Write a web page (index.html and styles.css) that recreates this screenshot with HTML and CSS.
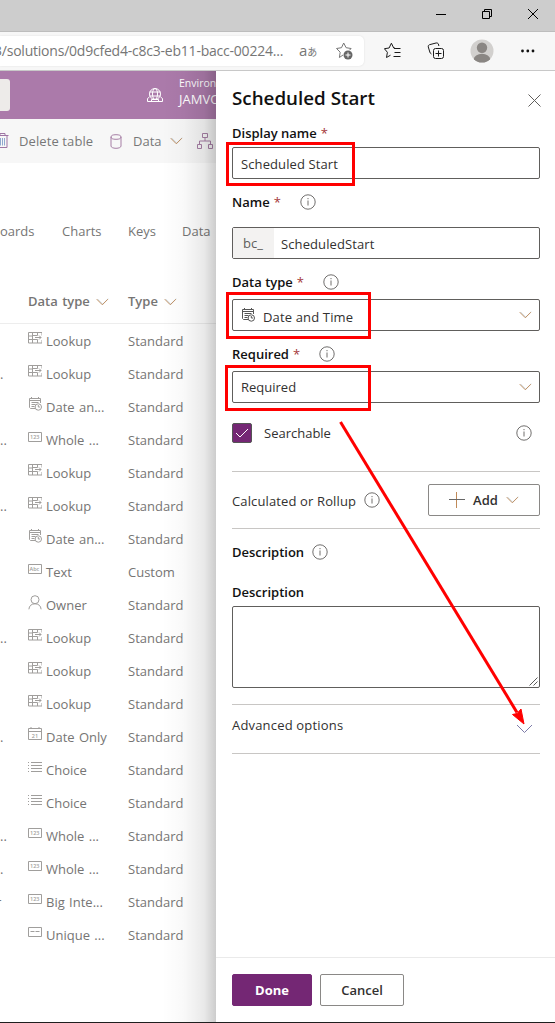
FILE: index.html
```html
<!DOCTYPE html>
<html lang="en">
<head>
<meta charset="utf-8">
<title>Scheduled Start</title>
<link rel="stylesheet" href="styles.css">
</head>
<body>
<svg class="defs" width="0" height="0">
  <symbol id="lookup" viewBox="0 0 14 12"><path d="M14 3.500v-3h-13.500v10.500h13.500v-3M.5 4h4M.5 7.500h4M4.500 .5v10.500M9.500 .5v3h-5M4.500 7.500h5v3.500M7 5.500h6M11 3.500l2 2l-2 2"/></symbol>
  <symbol id="datetime" viewBox="0 0 14 14"><path d="M7 11.500h-4.500l-1-1v-9h11v4.500M1.500 3.500h11M3.500 0v2M10.500 0v2M3.500 5.500h7M3.500 7.500h4M3.500 9.500h3"/><circle cx="10.300" cy="10" r="3.200"/><path d="M10.300 8v2h1.700"/></symbol>
  <symbol id="dateonly" viewBox="0 0 14 14"><path d="M.5 1.500h13v11h-13zM.5 4.500h13M3 0v2M11 0v2"/></symbol>
  <symbol id="frame" viewBox="0 0 14 11"><path d="M.5 .5h13v9h-13z"/></symbol>
  <symbol id="unique" viewBox="0 0 14 11"><path d="M.5 .5h13v9h-13zM2.500 4.500h4M7.500 4.500h4"/></symbol>
  <symbol id="choice" viewBox="0 0 14 11"><path d="M3 .5h11M3 3.500h11M3 6.500h11M3 9.500h11M0 .5h1M0 3.500h1M0 6.500h1M0 9.500h1"/></symbol>
  <symbol id="owner" viewBox="0 0 14 15"><circle cx="7" cy="4.700" r="4"/><path d="M.9 14.300c.2-3.500 2.600-5.500 6.100-5.500s5.900 2 6.100 5.500"/></symbol>
  <symbol id="chevron" viewBox="0 0 14 8"><path class="c2" d="M1.600 .8l5.600 5.600l6-6"/><path class="c1" d="M.8 1l6 6l6-6"/></symbol>
  <symbol id="info" viewBox="0 0 16 16"><circle cx="8" cy="8" r="7.200"/><path d="M8 6.500v5M8 4v1.200"/></symbol>
</svg>
<div class="window">
  <div class="titlebar">
    <svg width="13" height="12"><path d="M2 6.500h10"/></svg>
    <svg width="12" height="12"><path d="M1.500 3.500h7v7h-7zM3.500 3.500v-2h7v7h-2"/></svg>
    <svg width="12" height="12"><path d="M1 1l10 10M11 1l-10 10"/></svg>
  </div>
  <div class="toolbar">
    <div class="address">
      <span class="url">3/solutions/0d9cfed4-c8c3-eb11-bacc-00224...</span>
      <span class="translate">a<small>あ</small></span>
      <svg class="fav" width="18" height="18"><path d="M8 13l-3.600 2.500l.8-5.300l-3.700-3.700l5-.8l2.200-4.700l2.400 4.700l5 .8l-1.500 1.600"/><circle cx="13" cy="13" r="4.500" class="solid"/><path class="plus" d="M10.500 13h5M13 10.500v5"/></svg>
    </div>
    <div class="tools">
      <svg width="18" height="18"><path d="M6.500 13.200l-4 2.300l.9-5.200l-3-3.600l4.700-.7l2.300-4.800l2.300 4.800h1.300M10 6.500h6.500M10.500 10.500h6M9.500 14.500h7"/></svg>
      <svg width="18" height="18"><rect x="6.500" y="6.500" width="10" height="10" rx="2"/><path d="M8.500 11.500h6M11.500 8.500v6M4.500 12c-1-.5-1.500-1-1.700-2l-1.500-5c-.3-1.200.3-2 1.200-2.300l6.500-1.700c1.200-.2 2 .2 2.400 1l.5 2"/></svg>
      <svg class="avatar" width="24" height="24"><defs><clipPath id="disc"><circle cx="12" cy="12" r="11.500"/></clipPath></defs><circle cx="12" cy="12" r="11.500" fill="#d2d0ce"/><g clip-path="url(#disc)" fill="#8a8683"><circle cx="12" cy="8.700" r="5.200"/><ellipse cx="12" cy="20.300" rx="8.200" ry="5.500"/></g></svg>
      <svg class="more" width="16" height="6"><circle cx="2.500" cy="3" r="1.400"/><circle cx="7.800" cy="3" r="1.400"/><circle cx="13" cy="3" r="1.400"/></svg>
    </div>
  </div>
  <div class="app">
    <main class="page">
      <header class="brandbar">
        <div class="search"></div>
        <svg class="globe" width="18" height="17"><circle cx="9" cy="7" r="5.500"/><ellipse cx="9" cy="7" rx="2.500" ry="5.500"/><path d="M3.500 5h11M3.500 9h11M3.500 10l-2 1.500v3h15v-3l-2-1.500M5.500 14.500v-2h7v2"/></svg>
        <div class="env"><span>Environment</span><strong>JAMVO</strong></div>
      </header>
      <nav class="commands">
        <svg class="trash" width="13" height="16"><path d="M0 2.500h12.500M4 2.500v-2h5v2M2 2.500v12h9v-12"/><path class="slats" d="M4.500 5v7.500M6.500 5v7.500M8.500 5v7.500"/></svg>
        <span class="delete">Delete table</span>
        <svg class="cyl" width="12" height="15"><ellipse cx="6" cy="3" rx="5" ry="2.300"/><path d="M1 3v9c0 1.300 2 2.300 5 2.300s5-1 5-2.300v-9"/></svg>
        <span class="data">Data</span>
        <svg class="chev" width="13" height="8"><use href="#chevron"/></svg>
        <svg class="tree" width="16" height="16"><path d="M5.500 .5h5v4h-5zM.5 11.500h4v4h-4zM11.500 11.500h4v4h-4zM8 4.500v3.500M2.500 11.500v-3.500h11v3.500"/></svg>
      </nav>
      <div class="tabs"><span>oards</span><span>Charts</span><span>Keys</span><span>Data</span></div>
      <div class="row head"><i></i><span>Data type <svg class="chev" width="13" height="8"><use href="#chevron"/></svg></span><span>Type <svg class="chev" width="13" height="8"><use href="#chevron"/></svg></span></div>
      <div class="row"><i></i><span><svg class="ico"><use href="#lookup"/></svg>Lookup</span><span>Standard</span></div>
      <div class="row"><i>.</i><span><svg class="ico"><use href="#lookup"/></svg>Lookup</span><span>Standard</span></div>
      <div class="row"><i></i><span><svg class="ico tall"><use href="#datetime"/></svg>Date an...</span><span>Standard</span></div>
      <div class="row"><i>..</i><span><svg class="ico low"><use href="#frame"/><text x="2" y="7">123</text></svg>Whole ...</span><span>Standard</span></div>
      <div class="row"><i></i><span><svg class="ico"><use href="#lookup"/></svg>Lookup</span><span>Standard</span></div>
      <div class="row"><i>..</i><span><svg class="ico"><use href="#lookup"/></svg>Lookup</span><span>Standard</span></div>
      <div class="row"><i></i><span><svg class="ico tall"><use href="#datetime"/></svg>Date an...</span><span>Standard</span></div>
      <div class="row"><i></i><span><svg class="ico low"><use href="#frame"/><text x="1.500" y="7">Abc</text></svg>Text</span><span>Custom</span></div>
      <div class="row"><i></i><span><svg class="ico owner"><use href="#owner"/></svg>Owner</span><span>Standard</span></div>
      <div class="row"><i>..</i><span><svg class="ico"><use href="#lookup"/></svg>Lookup</span><span>Standard</span></div>
      <div class="row"><i></i><span><svg class="ico"><use href="#lookup"/></svg>Lookup</span><span>Standard</span></div>
      <div class="row"><i></i><span><svg class="ico"><use href="#lookup"/></svg>Lookup</span><span>Standard</span></div>
      <div class="row"><i>.</i><span><svg class="ico tall"><use href="#dateonly"/><text x="3.800" y="10.800">21</text></svg>Date Only</span><span>Standard</span></div>
      <div class="row"><i></i><span><svg class="ico low"><use href="#choice"/></svg>Choice</span><span>Standard</span></div>
      <div class="row"><i></i><span><svg class="ico low"><use href="#choice"/></svg>Choice</span><span>Standard</span></div>
      <div class="row"><i>..</i><span><svg class="ico low"><use href="#frame"/><text x="2" y="7">123</text></svg>Whole ...</span><span>Standard</span></div>
      <div class="row"><i>.</i><span><svg class="ico low"><use href="#frame"/><text x="2" y="7">123</text></svg>Whole ...</span><span>Standard</span></div>
      <div class="row"><i class="clip">r</i><span><svg class="ico low"><use href="#frame"/><text x="2" y="7">123</text></svg>Big Inte...</span><span>Standard</span></div>
      <div class="row"><i></i><span><svg class="ico low"><use href="#unique"/></svg>Unique ...</span><span>Standard</span></div>
    </main>
    <aside class="panel">
      <div class="body">
        <div class="title"><h1>Scheduled Start</h1><svg class="close" width="13" height="13"><path d="M.5 .5l12 12M12.500 .5l-12 12"/></svg></div>
        <label class="lab first">Display name <b>*</b></label>
        <div class="field"><span class="low">Scheduled Start</span></div>
        <label class="lab name">Name <b>*</b><svg class="info"><use href="#info"/></svg></label>
        <div class="field prefixed"><span class="prefix">bc_</span><span class="low">ScheduledStart</span></div>
        <label class="lab type">Data type <b>*</b><svg class="info"><use href="#info"/></svg></label>
        <div class="field select"><svg class="dt" width="14" height="14"><use href="#datetime"/></svg><span class="dtv">Date and Time</span><svg class="chev" width="13" height="8"><use href="#chevron"/></svg></div>
        <label class="lab req">Required <b>*</b><svg class="info"><use href="#info"/></svg></label>
        <div class="field select"><span>Required</span><svg class="chev" width="13" height="8"><use href="#chevron"/></svg></div>
        <div class="check"><span class="box"><svg width="14" height="10"><path d="M1 5l4 4l8-8"/></svg></span><span class="slabel">Searchable</span><svg class="info"><use href="#info"/></svg></div>
        <div class="calc"><span>Calculated or Rollup</span><svg class="info"><use href="#info"/></svg><button class="btn add"><svg class="plusico" width="16" height="16"><path class="c1" d="M7.500 0v16"/><path d="M0 7.500h16"/></svg><span>Add</span><svg class="chev" width="13" height="8"><use href="#chevron"/></svg></button></div>
        <div class="lab desc">Description<svg class="info"><use href="#info"/></svg></div>
        <label class="lab desc2">Description</label>
        <div class="area"><svg width="9" height="9"><path d="M.5 8.500l8-8M4.500 8.500l4-4"/></svg></div>
        <div class="advanced"><span>Advanced options</span><svg class="big" width="17" height="10"><path d="M1 1l7.500 7.500l7.500-7.500"/></svg></div>
      </div>
      <footer><button class="btn done">Done</button><button class="btn cancel">Cancel</button></footer>
    </aside>
  </div>
  <svg class="marks" width="555" height="1023"><rect x="227.500" y="143.500" width="126" height="41"/><rect x="227.500" y="293.500" width="142" height="44"/><rect x="226.500" y="366.500" width="143" height="43"/><path d="M340.500 422L517 712.500"/><path class="tip" d="M524 724L512.500 714.500L517 713.500L521 709z"/></svg>
</div>
</body>
</html>
```
FILE: styles.css
```css
* { box-sizing: border-box; }
body { margin: 0; font: 13px/20px "Open Sans", "Noto Sans", sans-serif; color: #323130; background: #fff; }
svg { fill: none; stroke: currentColor; flex: none; display: block; }
svg text { stroke: none; fill: currentColor; font: 600 5.5px "Open Sans", sans-serif; }
.defs { position: absolute; }
.window { position: relative; width: 555px; height: 1023px; overflow: hidden; display: flex; flex-direction: column; border-bottom: 1px solid #1f1f1f; }
.titlebar { height: 32px; background: #cdcdcd; border-bottom: 1px solid #bdbdbd; display: flex; justify-content: flex-end; gap: 34px; padding: 8px 16px 0 0; color: #000; }
.toolbar { height: 39px; background: #f7f7f7; border-bottom: 1px solid #c8c8c8; display: flex; }
.address { width: 364px; height: 30px; margin-top: 4px; background: #fff; border-radius: 0 5px 5px 0; box-shadow: 0 0 2px #ddd; display: flex; align-items: center; color: #767676; overflow: hidden; }
.url { font-size: 14px; width: 299px; margin-left: -6px; white-space: nowrap; letter-spacing: -.22px; }
.translate { width: 36px; font-size: 15px; margin-left: 6px; margin-top: -3px; white-space: nowrap; }
.translate small { font: 10px "Noto Sans CJK JP", sans-serif; }
.fav .solid { fill: #666; stroke: none; }
.fav .plus { stroke: #fff; }
.tools { flex: 1; display: flex; align-items: center; padding-left: 20px; color: #1b1b1b; }
.tools svg { margin-right: 25px; }
.tools .avatar { stroke: none; margin-right: 26px; }
.tools .more { fill: #111; stroke: none; margin: 0; }
.app { flex: 1; display: flex; min-height: 0; }
.page { width: 216px; position: relative; overflow: hidden; color: #767574; white-space: nowrap; }
.page::after { content: ""; position: absolute; inset: 0 0 0 auto; width: 54px; background: linear-gradient(90deg, transparent, rgba(0,0,0,.025) 40%, rgba(0,0,0,.085) 78%, rgba(0,0,0,.2)); }
.brandbar { height: 48px; background: #ab7aaa; color: #fff; display: flex; }
.search { flex: none; width: 10px; height: 32px; margin-top: 8px; background: #edebe9; border-radius: 0 3px 3px 0; }
.globe { margin: 16px 0 0 136px; }
.env { margin: 5px 0 0 15px; display: flex; flex-direction: column; font-size: 10.5px; line-height: 15px; }
.env strong { font-size: 13px; line-height: 17px; font-weight: 500; }
.commands { height: 44px; background: #f7f7f7; display: flex; align-items: center; color: #777; }
.trash { margin-left: -4px; color: #9e75a4; }
.trash .slats { stroke: #8fa9cf; }
.delete { width: 75px; margin-left: 10px; letter-spacing: .1px; }
.cyl { margin-left: 16px; color: #a67fa5; }
.data { width: 29px; margin: 0 8px 0 11px; }
.tree { margin-left: 14px; color: #a67fa5; }
.tabs { height: 136px; padding-top: 58px; display: flex; }
.tabs span { flex: none; width: 66px; }
.tabs span:first-child { width: 62px; }
.tabs span:nth-child(3) { width: 54px; }
.row { height: 33px; display: grid; grid-template-columns: 28px 100px 1fr; padding-top: 6px; line-height: 23px; align-items: start; }
.row span { display: flex; height: 23px; align-items: center; word-spacing: 1px; }
.row i { font-style: normal; width: 5px; }
.row .clip { margin-left: -4px; }
.head { height: 45px; margin-top: -20px; padding-top: 11px; border-bottom: 1px solid #ededed; font-weight: 600; }
.head .chev { margin-left: 6px; }
.c1 { stroke: #c08a58; }
.c2 { stroke: #8db0c8; stroke-width: .6; }
.ico { align-self: flex-start; width: 14px; height: 12px; margin: 2px 4px 0 0; color: #a09e9c; }
.ico.low { height: 11px; margin-top: 3px; }
.ico.tall { height: 14px; margin-top: 1px; }
.ico.owner { height: 15px; margin-top: 1px; }
.panel { width: 339px; background: #fff; display: flex; flex-direction: column; color: #323130; }
.body { flex: 1; padding: 0 15px 0 16px; }
.title { height: 50px; padding-top: 4px; display: flex; justify-content: space-between; align-items: center; color: #111; }
h1 { margin: 0; font-size: 18.800px; font-weight: 600; line-height: 24px; }
.close { margin-top: 4px; margin-right: -1px; color: #605e5c; }
.lab { display: flex; align-items: center; font-weight: 600; color: #111; height: 24px; }
.lab b { color: #a4373a; font-weight: 400; margin-left: 4px; }
.first { height: 26px; padding-bottom: 2px; }
.name { height: 48px; padding-bottom: 2px; }
.type { height: 40px; padding-top: 6px; }
.req { height: 40px; padding-top: 6px; }
.info { width: 16px; height: 16px; color: #605e5c; stroke-width: .9; }
.lab .info { margin-left: 19px; }
.field { height: 32px; border: 1px solid #605e5c; border-radius: 2px; padding: 0 7px 0 8px; display: flex; align-items: center; }
.field .low { padding-top: 2px; letter-spacing: .1px; }
.prefixed { padding-left: 0; }
.prefix { width: 41px; height: 30px; line-height: 30px; padding-left: 10px; margin-right: 7px; background: #f3f2f1; color: #605e5c; }
.select .chev { margin-left: auto; }
.dt { margin-right: 8px; color: #555; }
.dtv { padding-top: 3px; letter-spacing: .15px; }
.check { height: 69px; padding: 20px 8px 0 0; display: flex; border-bottom: 1px solid #c8c6c4; }
.box { width: 20px; height: 20px; background: #742774; border: 1px solid #555; color: #fff; border-radius: 2px; display: grid; place-items: center; }
.slabel { flex: 1; margin-left: 12px; }
.check .info { margin-top: 2px; }
.calc { height: 57px; display: flex; align-items: center; border-bottom: 1px solid #c8c6c4; letter-spacing: .13px; }
.calc > span { padding-top: 2px; }
.calc .info { margin-left: 8px; }
.btn { height: 32px; border: 1px solid #8a8886; border-radius: 2px; background: #fff; color: #323130; font: 600 13px/20px "Open Sans", sans-serif; padding: 0; }
.add { width: 112px; margin-left: auto; display: flex; align-items: center; justify-content: center; gap: 8px; }
.plusico { color: #666; }
.desc { height: 46px; }
.lab.desc .info { margin-left: 8px; }
.desc2 { height: 31px; padding-top: 2px; }
.area { height: 82px; border: 1px solid #605e5c; border-radius: 2px; display: flex; align-items: flex-end; justify-content: flex-end; padding: 0 1px 1px 0; }
.area svg { stroke-width: .8; }
.advanced { margin-top: 16px; height: 50px; border: solid #c8c6c4; border-width: 1px 0; display: flex; justify-content: space-between; padding: 10px 7px 0 0; letter-spacing: .18px; }
.advanced .big { margin-top: 9px; color: #7d7ba8; }
footer { height: 65px; border-top: 1px solid #eaeaea; padding: 16px; display: flex; gap: 8px; }
.done { width: 80px; background: #742774; border-color: #742774; color: #fff; font-weight: 700; }
.cancel { width: 84px; }
.marks { position: absolute; inset: 0; stroke: #f00; stroke-width: 3; pointer-events: none; }
.marks .tip { fill: #f00; stroke-width: 1; }
```
